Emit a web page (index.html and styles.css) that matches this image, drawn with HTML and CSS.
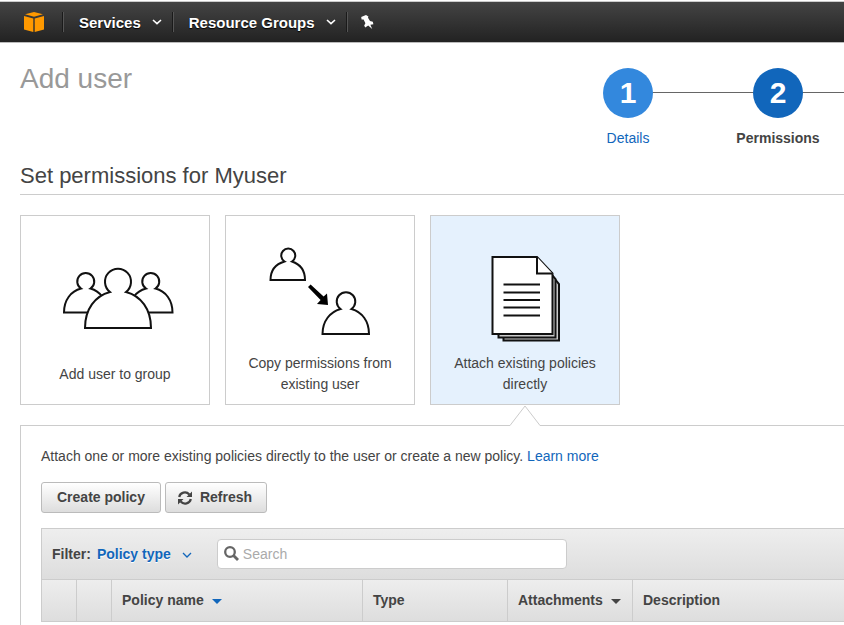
FILE: index.html
```html
<!DOCTYPE html>
<html lang="en">
<head>
    <meta charset="UTF-8">
    <meta name="viewport" content="width=device-width, initial-scale=1.0">
    <title>Add user</title>
    <link rel="stylesheet" href="styles.css">
</head>
<body>
    <header class="navbar">
        <a href="#" class="nav-logo" aria-label="Home">
            <svg width="20" height="20" viewBox="0 0 20 20" fill="#f90">
                <path d="M10 0L19 2.2L10 4.8L1 2.2Z"/>
                <path d="M0 4L9.3 6.5V20L0 17.6Z"/>
                <path d="M20 4L10.7 6.5V20L20 17.6Z"/>
            </svg>
        </a>
        <button type="button" class="nav-item">Services
            <svg width="10" height="6" viewBox="0 0 10 6"><path d="M1 1L5 4.6L9 1" fill="none" stroke="#fff" stroke-width="1.6"/></svg>
        </button>
        <button type="button" class="nav-item">Resource Groups
            <svg width="10" height="6" viewBox="0 0 10 6"><path d="M1 1L5 4.6L9 1" fill="none" stroke="#fff" stroke-width="1.6"/></svg>
        </button>
        <button type="button" class="nav-pin" aria-label="Pin">
            <svg width="13" height="14" viewBox="0 0 13 14"><path d="M5 0L7.4 1.4L7 2.8L9 6L11.8 6.8L12.4 9.2L9.4 9.8L11.2 14L7.2 10.6L4.2 12.4L3.2 10.4L4.4 8.2L2.6 4.6L0.6 4.4L0.2 2Z" fill="#fff"/></svg>
        </button>
    </header>

    <main class="page">
        <div class="page-top">
            <h1>Add user</h1>
            <ol class="steps">
                <li class="step">
                    <span class="step-number">1</span>
                    <a href="#" class="step-label">Details</a>
                </li>
                <li class="step active">
                    <span class="step-number">2</span>
                    <span class="step-label">Permissions</span>
                </li>
            </ol>
        </div>

        <h2>Set permissions for Myuser</h2>

        <div class="cards">
            <button type="button" class="card">
                <svg class="card-icon" viewBox="-7 -22 120 100">
                    <path d="M2 45.5H45C45 33 38 24 28.5 21.5A8.5 8.5 0 1 0 19 21.5C9 24 2 33 2 45.5Z"/>
                    <path d="M67 45.5H110.5C110.5 33 103.5 24 93.5 21.5A8.5 8.5 0 1 0 84 21.5C74 24 67 33 67 45.5Z"/>
                    <path d="M23 61H89C89 42 79 29 64 25A13 13 0 1 0 48 25C33 29 23 42 23 61Z"/>
                </svg>
                <span class="card-text">Add user to group</span>
            </button>
            <button type="button" class="card">
                <svg class="card-icon" viewBox="-8 -3 120 100">
                    <path d="M2.5 32H37C37 22 31.5 16 24 13.5A7 7 0 1 0 16.5 13.5C8 16 2.5 22 2.5 32Z"/>
                    <path d="M54.5 86H101C101 73 94 64 83.5 61A9.3 9.3 0 1 0 72.5 61C62 64 54.5 73 54.5 86Z"/>
                    <path class="solid" d="M42.6 36.4L55.6 48.4L59 45.4L60 57L49 56L52.6 52L40 39Z"/>
                </svg>
                <span class="card-text">Copy permissions from existing user</span>
            </button>
            <button type="button" class="card selected">
                <svg class="card-icon" viewBox="-25 -10 120 100">
                    <path class="sheet-back" d="M13.5 18H60L69 29V85.5H13.5Z"/>
                    <path class="sheet-back" d="M8.5 13H56L65.5 24V82.5H8.5Z"/>
                    <path d="M2.5 2H47L62.5 18.5V79H2.5Z"/>
                    <path d="M47 2V18.5H62.5"/>
                    <path d="M13.5 29.5H50M13.5 37.5H50M13.5 45H50M13.5 52.5H50M13.5 60.5H50"/>
                </svg>
                <span class="card-text">Attach existing policies directly</span>
                <svg class="card-pointer" width="30" height="21" viewBox="0 0 30 21"><path d="M0 20.5L15 1L30 20.5V21H0Z" fill="#fff"/><path d="M0 20.5L15 1L30 20.5" fill="none" stroke="#ccc"/></svg>
            </button>
        </div>

        <section class="panel">
            <p>Attach one or more existing policies directly to the user or create a new policy. <a href="#">Learn more</a></p>
            <div class="actions">
                <button type="button" class="btn">Create policy</button>
                <button type="button" class="btn btn-refresh">
                    <svg width="14" height="14" viewBox="0 0 14 14">
                        <path d="M1.2 6A5.8 5.6 0 0 1 11.3 3.4M12.8 8A5.8 5.6 0 0 1 2.7 10.6" fill="none" stroke="#444" stroke-width="2.2"/>
                        <path d="M14 0.5V6H8.5ZM0 13.5V8H5.5Z" fill="#444"/>
                    </svg>
                    Refresh
                </button>
            </div>

            <div class="filter-bar">
                <span>Filter:</span>
                <button type="button" class="filter-type">Policy type
                    <svg width="10" height="6" viewBox="0 0 10 6"><path d="M1 1L5 5L9 1" fill="none" stroke="#1166bb" stroke-width="1.3"/></svg>
                </button>
                <div class="search-box">
                    <svg width="15" height="16" viewBox="0 0 15 16" fill="none" stroke="#666"><circle cx="6" cy="6" r="4.8" stroke-width="2.3"/><path d="M9.5 9.5L14 14" stroke-width="2.8"/></svg>
                    <input type="text" id="search" placeholder="Search" aria-label="Search">
                </div>
            </div>

            <table class="policies">
                <colgroup>
                    <col class="col-small">
                    <col class="col-small">
                    <col class="col-name">
                    <col class="col-type">
                    <col class="col-attachments">
                    <col>
                </colgroup>
                <thead>
                    <tr>
                        <th></th>
                        <th></th>
                        <th>Policy name <span class="sort sort-active"></span></th>
                        <th>Type</th>
                        <th>Attachments <span class="sort"></span></th>
                        <th>Description</th>
                    </tr>
                </thead>
            </table>
        </section>
    </main>
</body>
</html>
```
FILE: styles.css
```css
* {
    box-sizing: border-box;
}
body {
    margin: 0;
    background: #fff;
    color: #444;
    font-family: "Liberation Sans", Arial, sans-serif;
    font-size: 14px;
    line-height: 21px;
}
button, input {
    font: inherit;
    color: inherit;
}
a {
    color: #1166bb;
    text-decoration: none;
}

/* top navigation */
.navbar {
    display: flex;
    align-items: center;
    height: 42px;
    margin-top: 1px;
    border-top: 1px solid #ccc;
    border-bottom: 1px solid #bbb;
    background: linear-gradient(#444, #222);
}
.nav-logo {
    display: flex;
    padding: 0 18px 0 24px;
}
.nav-item {
    display: flex;
    align-items: center;
    gap: 11px;
    height: 20px;
    padding: 0 10px 0 16px;
    border: 0;
    border-left: 1px solid #1a1a1a;
    box-shadow: inset 1px 0 #555;
    background: none;
    color: #fff;
    font-size: 15px;
    font-weight: bold;
    text-shadow: 0 1px 1px #000;
}
.nav-pin {
    display: flex;
    align-items: center;
    height: 20px;
    padding: 0 14px;
    border: 0;
    border-left: 1px solid #1a1a1a;
    box-shadow: inset 1px 0 #555;
    background: none;
}

/* title and wizard steps */
.page {
    padding-left: 20px;
}
.page-top {
    display: flex;
    justify-content: space-between;
    padding-top: 19px;
}
h1 {
    margin: 0;
    color: #999;
    font-size: 28px;
    font-weight: normal;
    line-height: 34px;
}
.steps {
    display: flex;
    gap: 18px;
    margin: 0;
    padding: 6px 0 0;
    list-style: none;
}
.step {
    position: relative;
    display: flex;
    flex-direction: column;
    align-items: center;
    gap: 10px;
    width: 132px;
}
.step::before {
    content: "";
    position: absolute;
    top: 24px;
    left: 50%;
    width: calc(100% + 18px);
    height: 1px;
    background: #666;
}
.step:last-child::before {
    width: 50%;
}
.step-number {
    position: relative;
    width: 50px;
    height: 50px;
    border-radius: 50%;
    background: #3388dd;
    color: #fff;
    font-size: 30px;
    font-weight: bold;
    line-height: 50px;
    text-align: center;
}
.active .step-number {
    background: #1166bb;
}
.active .step-label {
    font-weight: bold;
}
h2 {
    margin: 13px 0 20px;
    padding-bottom: 5px;
    border-bottom: 1px solid #ccc;
    font-size: 22px;
    font-weight: normal;
    line-height: 27px;
}

/* permission choices */
.cards {
    display: flex;
    gap: 15px;
}
.card {
    position: relative;
    display: flex;
    flex-direction: column;
    align-items: center;
    justify-content: space-between;
    width: 190px;
    height: 190px;
    padding: 29px 10px 9px;
    border: 1px solid #ccc;
    background: #fff;
}
.card.selected {
    background: #e5f1fd;
}
.card-icon {
    width: 120px;
    height: 100px;
    fill: #fff;
    stroke: #111;
    stroke-width: 2;
}
.card-icon .solid {
    fill: #000;
    stroke: none;
}
.card-icon .sheet-back {
    fill: #ccc;
}
.card-text {
    display: flex;
    align-items: center;
    height: 42px;
}
.card-pointer {
    position: absolute;
    top: 100%;
    left: 50%;
    z-index: 1;
    margin: 1px 0 0 -15px;
}

/* policies panel */
.panel {
    margin-top: 20px;
    padding: 20px 0 30px 20px;
    border: 1px solid #ccc;
    border-right: 0;
}
.panel p {
    margin: 0 0 15px;
}
.actions {
    display: flex;
    gap: 4px;
    margin-bottom: 15px;
}
.btn {
    display: flex;
    align-items: center;
    gap: 8px;
    height: 31px;
    padding: 0 15px;
    border: 1px solid #bbb;
    border-radius: 3px;
    background: linear-gradient(#fff, #ddd);
    font-weight: bold;
}
.btn-refresh {
    padding: 0 14px 0 12px;
}
.filter-bar {
    display: flex;
    align-items: center;
    height: 51px;
    padding-left: 10px;
    border: 1px solid #ccc;
    border-width: 1px 0 0 1px;
    background: linear-gradient(#eee, #ddd);
    font-weight: bold;
}
.filter-type {
    display: flex;
    align-items: center;
    gap: 11px;
    padding: 1px 0 0;
    margin: 0 25px 0 6px;
    border: 0;
    background: none;
    color: #1166bb;
    text-shadow: 0 1px #fff;
}
.search-box {
    display: flex;
    align-items: center;
    gap: 4px;
    width: 350px;
    height: 30px;
    padding: 0 6px;
    border: 1px solid #ccc;
    border-radius: 4px;
    background: #fff;
    font-weight: normal;
}
.search-box input {
    flex: 1;
    padding: 0;
    border: 0;
    outline: 0;
}
.search-box input::placeholder {
    color: #aaa;
}
.policies {
    width: 100%;
    table-layout: fixed;
    border-collapse: separate;
    border-spacing: 0;
    background: linear-gradient(#eee, #ddd);
}
.policies th {
    height: 43px;
    padding: 0 10px;
    border: 1px solid #ccc;
    border-right: 0;
    text-align: left;
}
.col-small {
    width: 35px;
}
.col-name {
    width: 251px;
}
.col-type {
    width: 145px;
}
.col-attachments {
    width: 125px;
}
.sort {
    display: inline-block;
    margin-left: 4px;
    border: 5px solid transparent;
    border-top-color: #444;
    border-bottom: 0;
    vertical-align: 1px;
}
.sort-active {
    border-top-color: #1166bb;
}
```
